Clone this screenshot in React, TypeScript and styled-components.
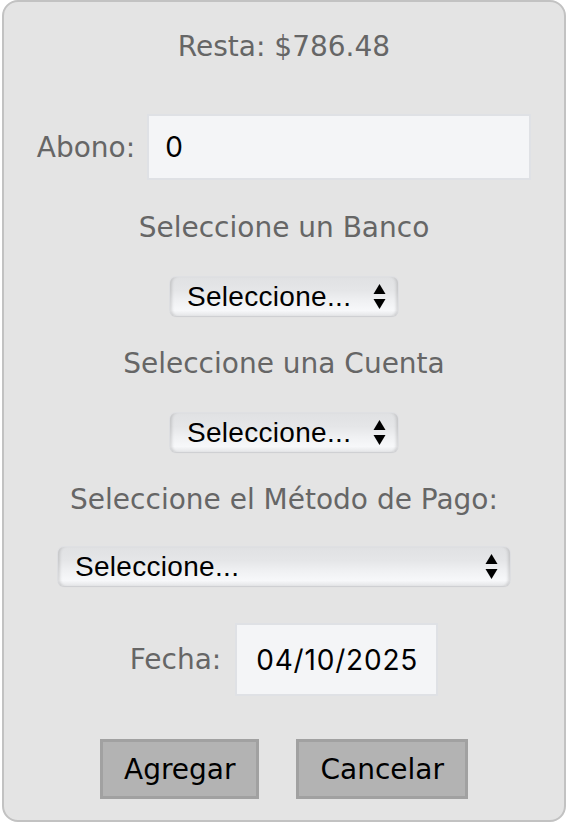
import React from "react";
import styled, { createGlobalStyle } from "styled-components";

const Global = createGlobalStyle`
  html, body { margin: 0; padding: 0; background: #ffffff; }
  * { box-sizing: border-box; }
`;

const Card = styled.div`
  margin-left: 2px;
  width: 564px;
  height: 822px;
  background: #e4e4e4;
  border: 2px solid #c2c2c2;
  border-radius: 16px;
  display: flex;
  flex-direction: column;
  align-items: center;
  font-family: "DejaVu Sans", sans-serif;
  font-size: 28px;
  color: #666666;
`;

const Title = styled.div`
  margin-top: 28px;
  line-height: 33px;
`;

const FieldRow = styled.div<{ $mt: number; $gap: number }>`
  display: flex;
  align-items: center;
  gap: ${(p) => p.$gap}px;
  margin-top: ${(p) => p.$mt}px;
`;

const FieldLabel = styled.label`
  line-height: 33px;
`;

const TextInput = styled.input<{ $w: number; $h: number; $pl: number }>`
  width: ${(p) => p.$w}px;
  height: ${(p) => p.$h}px;
  background: #f4f5f7;
  border: 2px solid #dfe1e5;
  border-radius: 0;
  outline: none;
  padding: 0 0 0 ${(p) => p.$pl}px;
  font-family: Inter, "Liberation Sans", sans-serif;
  font-size: 28px;
  letter-spacing: 0.8px;
  color: #000000;
`;

const SectionLabel = styled.label`
  margin-top: 31px;
  line-height: 33px;
`;

const SelectWrap = styled.div<{ $w: number; $mt: number }>`
  position: relative;
  margin-top: ${(p) => p.$mt}px;
  width: ${(p) => p.$w}px;
  height: 39px;
`;

const NativeSelect = styled.select`
  appearance: none;
  -webkit-appearance: none;
  width: 100%;
  height: 100%;
  border: none;
  border-radius: 6px;
  padding: 0 40px 0 17px;
  font-family: "Liberation Sans", Arial, sans-serif;
  font-size: 28px;
  letter-spacing: 0.3px;
  color: #000000;
  background: linear-gradient(
    to bottom,
    #e0e1e3 0%,
    #e5e6e8 35%,
    #f0f1f3 62%,
    #f7f8fa 86%,
    #e4e5e7 100%
  );
  box-shadow:
    inset 4px 0 3px -2px rgba(0, 0, 0, 0.13),
    inset -4px 0 3px -2px rgba(0, 0, 0, 0.13),
    0 1px 1px rgba(0, 0, 0, 0.08),
    0 0 0 1px rgba(220, 222, 226, 0.6);
  outline: none;
`;

const Arrows = styled.svg`
  position: absolute;
  right: 12px;
  top: 7px;
  width: 13px;
  height: 25px;
  pointer-events: none;
`;

const ButtonRow = styled.div`
  display: flex;
  gap: 37px;
  margin-top: 43px;
`;

const Button = styled.button`
  height: 60px;
  padding: 0 21px;
  background: #b3b3b3;
  border: 3px solid #a1a1a1;
  border-radius: 0;
  font-family: "DejaVu Sans", sans-serif;
  font-size: 28px;
  color: #000000;
  line-height: 33px;
`;

function Select({ width, mt = 33 }: { width: number; mt?: number }) {
  return (
    <SelectWrap $w={width} $mt={mt}>
      <NativeSelect defaultValue="">
        <option value="">Seleccione...</option>
      </NativeSelect>
      <Arrows viewBox="0 0 13 25">
        <polygon points="6.5,0 12.5,10 0.5,10" fill="#000" />
        <polygon points="0.5,15 12.5,15 6.5,25" fill="#000" />
      </Arrows>
    </SelectWrap>
  );
}

export default function App() {
  return (
    <>
      <Global />
      <Card>
        <Title>Resta: $786.48</Title>
        <FieldRow $mt={51} $gap={12}>
          <FieldLabel>Abono:</FieldLabel>
          <TextInput $w={384} $h={66} $pl={16} defaultValue="0" />
        </FieldRow>
        <SectionLabel>Seleccione un Banco</SectionLabel>
        <Select width={228} />
        <SectionLabel>Seleccione una Cuenta</SectionLabel>
        <Select width={228} />
        <SectionLabel>Seleccione el Método de Pago:</SectionLabel>
        <Select width={452} mt={31} />
        <FieldRow $mt={37} $gap={14}>
          <FieldLabel>Fecha:</FieldLabel>
          <TextInput $w={203} $h={73} $pl={19} defaultValue="04/10/2025" />
        </FieldRow>
        <ButtonRow>
          <Button>Agregar</Button>
          <Button>Cancelar</Button>
        </ButtonRow>
      </Card>
    </>
  );
}
